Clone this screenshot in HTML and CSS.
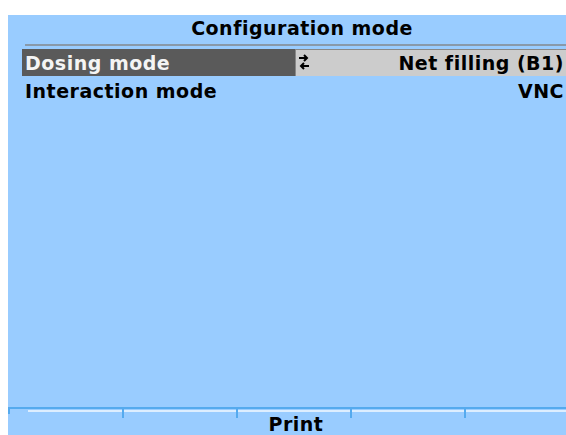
FILE: index.html
```html
<!DOCTYPE html>
<html lang="en">

<head>
  <meta charset="UTF-8" />
  <title>Configuration mode</title>

  <link rel="stylesheet" href="styles.css">
</head>

<body>
  <div class="screen">
    <div class="title">Configuration mode</div>

    <div class="row row-selected">
      <span class="row-label">Dosing mode</span>
      <span class="row-value">
        <svg class="swap" width="12" height="20" viewBox="0 0 12 20">
          <path d="M1 7h8M6 4l3 3-3 3" fill="none" stroke="#000" stroke-width="2" />
          <path d="M11 15H3M6 12l-3 3 3 3" fill="none" stroke="#000" stroke-width="2" />
        </svg>
        <span class="value-text">Net filling (B1)</span>
      </span>
    </div>

    <div class="row">
      <span class="row-label">Interaction mode</span>
      <span class="value-text">VNC</span>
    </div>

    <div class="spacer"></div>

    <div class="softkeys">
      <div class="softkey first"></div>
      <div class="softkey"></div>
      <div class="softkey">Print</div>
      <div class="softkey"></div>
      <div class="softkey"></div>
    </div>
  </div>
</body>

</html>
```

FILE: styles.css
```css
body {
  margin: 0;
  background: #fff;
  overflow: hidden;
  font-family: "DejaVu Sans", sans-serif;
  font-weight: bold;
  font-size: 19px;
  letter-spacing: 0.5px;
  color: #000;
}

.screen {
  margin: 15px 0 0 8px;
  width: 570px;
  height: 420px;
  background: #99ccff;
  display: flex;
  flex-direction: column;
}

.title {
  margin: 0 9px 0 17px;
  height: 31px;
  line-height: 27px;
  text-align: center;
  border-bottom: 2px solid #8899aa;
  box-sizing: border-box;
  padding-left: 10px;
}

.row {
  display: flex;
  align-items: center;
  justify-content: space-between;
  height: 27px;
  margin: 3px 12px 0 14px;
  padding-left: 3px;
}

.row + .row {
  margin-top: 1px;
}

.row-selected {
  background: #5a5a5a;
  color: #f4f4f4;
}

.row-value {
  display: flex;
  align-items: flex-start;
  justify-content: space-between;
  width: 271px;
  height: 100%;
  box-sizing: border-box;
  background: #cccccc;
  border-top: 1px solid #888;
  border-left: 1px solid #888;
  color: #000;
  padding-left: 2px;
  line-height: 26px;
}

.value-text {
  padding-right: 2px;
}

.swap {
  display: block;
  margin-top: 1px;
}

.spacer {
  flex: 1;
}

.softkeys {
  display: flex;
  height: 28px;
  box-sizing: border-box;
  border-top: 2px solid #55aaee;
}

.softkey {
  width: 114px;
  flex: none;
  padding-left: 6px;
  border-top: 3px solid transparent;
  background:
    linear-gradient(#ddeeff, #ddeeff) no-repeat 2px 1px / 100% 2px,
    linear-gradient(#55aaee, #55aaee) no-repeat 0 0 / 2px 9px;
  background-origin: border-box;
  text-align: center;
  line-height: 24px;
  box-sizing: border-box;
}

.softkey.first {
  background:
    linear-gradient(#ddeeff, #ddeeff) no-repeat 20px 1px / 100% 2px,
    linear-gradient(#55aaee, #55aaee) no-repeat 0 0 / 2px 5px;
  background-origin: border-box;
}
```
